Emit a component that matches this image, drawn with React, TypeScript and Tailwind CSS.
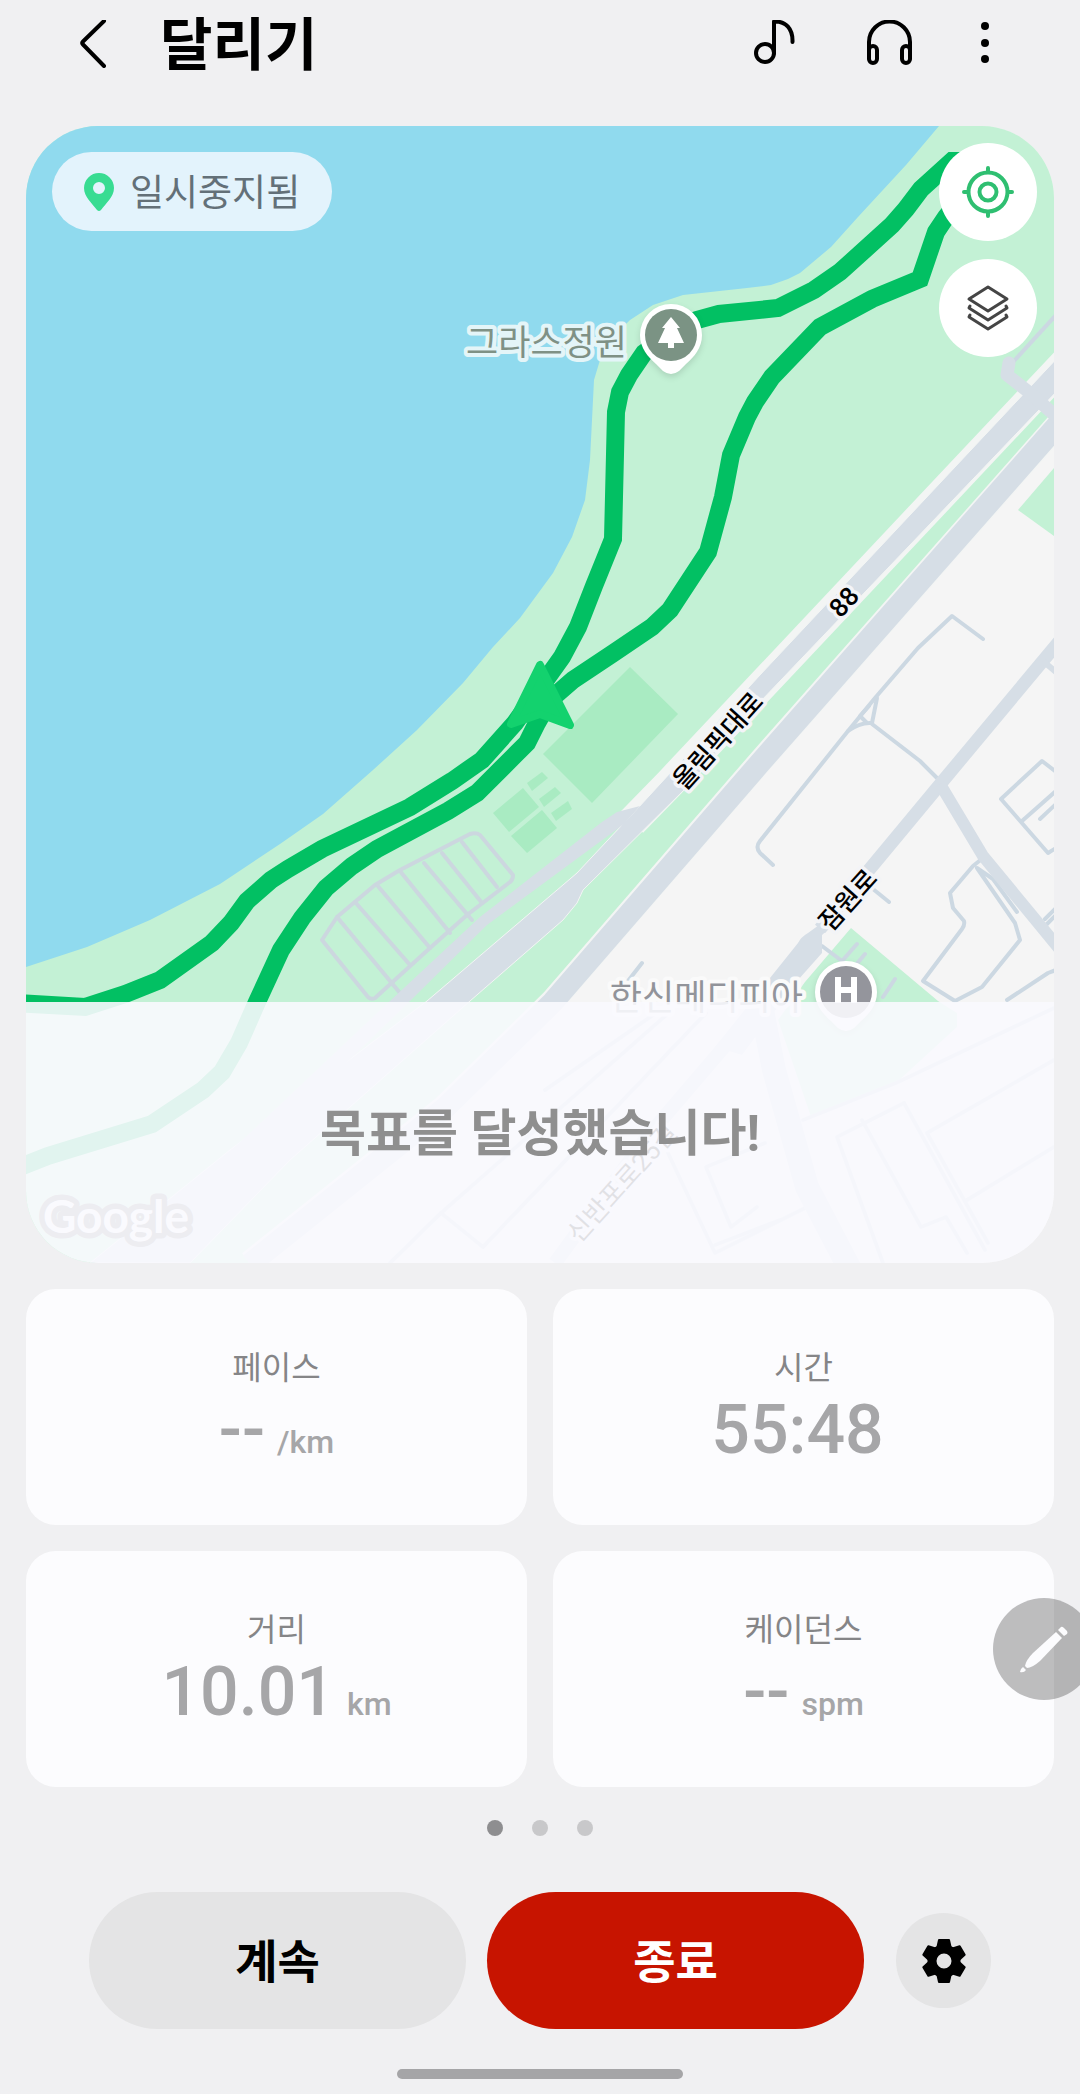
import React from 'react';

type Metric = {
  label: string;
  value: string;
  unit?: string;
};

const metrics: Metric[] = [
  { label: '페이스', value: '--', unit: '/km' },
  { label: '시간', value: '55:48' },
  { label: '거리', value: '10.01', unit: 'km' },
  { label: '케이던스', value: '--', unit: 'spm' },
];

const Header: React.FC = () => {
  return (
    <header className="flex h-[88px] items-center pl-[70px] pr-[91px]">
      <button type="button" aria-label="뒤로" className="flex h-12 w-12 items-center justify-center">
        <svg width="48" height="48" viewBox="0 0 48 48" fill="none" stroke="#000" strokeWidth="4" strokeLinecap="round" strokeLinejoin="round">
          <path d="M34 1 13 21.500Q11.500 23 13 24.500L34 46" />
        </svg>
      </button>
      <h1 className="ml-[42px] flex-1 pt-1 text-[57px] font-bold leading-[72px] text-black">달리기</h1>
      <div className="flex items-center">
        <button type="button" aria-label="음악" className="mr-[62px] flex">
          <svg width="48" height="48" viewBox="0 0 48 48" fill="none" stroke="#000" strokeWidth="4" strokeLinecap="round" strokeLinejoin="round">
            <circle cx="14" cy="33" r="9" />
            <path d="M23 33V1.500C35 1 42 9 41.500 22" />
          </svg>
        </button>
        <button type="button" aria-label="오디오 안내" className="mr-16 flex">
          <svg width="56" height="48" viewBox="0 0 56 48" fill="none" stroke="#000" strokeWidth="4" strokeLinecap="round" strokeLinejoin="round">
            <path d="M8 38V22a20.500 20.500 0 0 1 41 0v16" />
            <rect x="8" y="26" width="8" height="17" rx="4" />
            <rect x="41" y="26" width="8" height="17" rx="4" />
          </svg>
        </button>
        <button type="button" aria-label="더보기" className="flex">
          <svg width="8" height="48" viewBox="0 0 8 48" fill="#000">
            <circle cx="4" cy="6" r="4" />
            <circle cx="4" cy="23" r="4" />
            <circle cx="4" cy="39" r="4" />
          </svg>
        </button>
      </div>
    </header>
  );
};

const MapDrawing: React.FC = () => {
  return (
    <svg
      className="absolute inset-0 h-full w-full"
      viewBox="26 126 1028 1137"
      preserveAspectRatio="xMidYMid slice"
      role="img"
      aria-label="운동 경로 지도"
    >
      {/* 땅과 강 */}
      <rect x="26" y="126" width="1028" height="1137" fill="#f5f5f5" />
      <path
        fill="#c3f1d5"
        d="M26 126H1054V427L760 762 553 1001 445 1107 250 1263H26Z"
      />
      <path
        fill="#90daee"
        d="M26 126H939L906 165 858 217 831 247 800 273 788 279 771 285 747 288 683 295 653 305 630 320 610 340 600 360 594 380 592 420 590 460 585 500 572 537 553 573 520 618 493 647 463 683 417 730 373 770 323 814 280 844 220 884 150 920 87 947 26 967Z"
      />
      <path fill="#c3f1d5" d="M1054 468 1018 510 1054 536Z" />
      <path fill="#c3f1d5" d="M851 928 938 1001 957 1013V1027L896 1083 811 1117 778 1020 805 982Z" />

      {/* 운동장 */}
      <g fill="#a9ebc2">
        <path d="M630 667 678 714 592 803 543 754Z" />
        <path d="M527 783 542 772 548 778 532 791Z" />
        <path d="M539 799 555 787 561 793 544 807Z" />
        <path d="M551 813 568 801 572 809 556 821Z" />
        <path d="M493 813 523 788 539 807 509 832Z" />
        <path d="M511 836 542 810 557 828 527 853Z" />
      </g>

      {/* 주차장 */}
      <g fill="none" stroke="#ccd7df" strokeWidth="4" strokeLinejoin="round" strokeLinecap="round">
        <path d="M322 940 337 917 375 885 400 870 470 834Q476 832 480 835L513 875Q513 880 510 882L467 915 430 948 375 998Q371 1000 368 997Z" />
        <path d="M337 917 400 993M355 902 410 965M377 885 430 948M400 871 450 933M424 863 472 920M442 853 482 903M462 842 497 887" />
      </g>

      {/* 골목길 */}
      <g fill="none" stroke="#ccd8e2" strokeWidth="4" strokeLinejoin="round" strokeLinecap="round">
        <path d="M983 639 952 616 918 648 875 698 848 731 760 841Q755 847 760 853L773 865" />
        <path d="M877 698 872 723Q860 722 848 731M869 706 860 716 867 723" />
        <path d="M872 724 920 761 937 778" />
        <path d="M1060 775 1042 761 1001 799 1048 853 1056 848M1022 821 1056 791M1040 819 1056 804" />
        <path d="M983 858 973 866 950 893 953 908 964 921Q965 925 962 929L923 981 955 1001 982 987 1020 940 1015 923 977 868 993 879 1017 912" />
        <path d="M1045 919 1056 908M1047 924 1056 915M1056 970 1048 973 1007 1000" />
        <path d="M873 889 889 902M822 946 842 961 857 944M865 954 855 966M895 979 883 997M642 963 628 981" />
        <path d="M672 1010 441 1213 483 1247 706 1013M656 1013 545 1090M1054 1008 896 1083 803 1120" />
        <path d="M1054 1060 927 1133 988 1243M1054 1147 967 1200M904 1103 837 1137 883 1263" />
        <path d="M862 1120 921 1227 946 1217 967 1253M904 1103 985 1250M668 1153 715 1253 807 1207" />
        <path d="M765 1143 706 1167 731 1227 757 1207M715 1245 780 1220M441 1213 390 1263" />
      </g>

      {/* 큰길 */}
      <g fill="none" stroke="#d6dee6" strokeLinejoin="round">
        <path strokeWidth="13" d="M1062 638 942 782 820 929" />
        <path strokeWidth="12" d="M940 784 983 856 1062 952" />
        <path strokeWidth="6" d="M1043 661 1056 672" />
        <path strokeWidth="24" d="M760 1000 774 1070 807 1187 853 1275" />
        <path strokeWidth="14" d="M730 1040 647 1137 555 1263" />
      </g>
      <path fill="#d6dee6" d="M826 920 808 933Q801 937 798 943L715 1047 742 1055 798 980 822 953V935L832 926Z" />

      {/* 올림픽대로 */}
      <path fill="none" stroke="#f3f5f4" strokeWidth="31" d="M1070 358 670 783 632 822" />
      <path fill="none" stroke="#f3f5f4" strokeWidth="25" d="M1070 411 760 762 553 1001 445 1107 250 1263" />
      <path fill="none" stroke="#d6dee6" strokeWidth="22" d="M1070 411 760 763 553 1002 445 1108 250 1264" />
      <path
        fill="#d6dee6"
        stroke="#f3f5f4"
        d="M1060 355 760 675 638 808 622 825 577 873 427 1001 230 1150 90 1263H190L290 1160 470 1001 563 920 577 903 583 890 688 786 760 702 1060 388Z"
      />
      <path fill="#d6dee6" d="M640 806 617 812 602 822 480 917 390 1001 200 1180 215 1190 410 1001 487 925 624 824Z" />
      <path fill="none" stroke="#ccd8e2" strokeWidth="4" d="M1056 315 1013 362" />
      <path fill="none" stroke="#d6dee6" strokeWidth="13" strokeLinecap="round" strokeLinejoin="round" d="M1009 363 1007 375 1030 393 1060 420" />

      {/* 달린 경로 */}
      <g fill="none" stroke="#02c063" strokeWidth="18" strokeLinejoin="miter">
        <path d="M975 161H952L921 189 906 209 892 225 840 272 814 290 778 308 719 314 697 320 672 332 644 353 629 375 620 392 616 412 613 539 594 586 578 627 562 657 515 723 482 760 452 781 410 807 322 849 288 869 271 880 247 901 231 923 212 943 160 980 125 994 85 1007 15 1003" />
        <path d="M960 200 946 217 936 232 920 279 872 299 820 327 772 377 755 402 747 417 731 455 723 497 708 552 670 610 652 627 612 654 573 680 550 700 537 723 527 743 513 757 477 793 448 811 377 849 352 866 326 888 302 918 281 950 257 1002 239 1043 222 1072 203 1090 152 1124 48 1156 15 1169" />
      </g>
      <path fill="#13d26e" stroke="#13d26e" strokeWidth="8" strokeLinejoin="round" d="M540 665 511 724 540 714 570 725Z" />

      {/* 지명 */}
      <g fontSize="35" textAnchor="end" paintOrder="stroke" strokeWidth="8" strokeLinejoin="round">
        <text x="627" y="355" fill="#7f9185" stroke="#e4f5f8">그라스정원</text>
        <text x="803" y="1010" fill="#92949a" stroke="#fafafa">한신메디피아</text>
      </g>
      <g fontSize="26" fontWeight="500" textAnchor="middle" fill="#000" stroke="#f3f4f7" paintOrder="stroke" strokeWidth="7" strokeLinejoin="round">
        <text transform="translate(718 741) rotate(-48)" y="9">올림픽대로</text>
        <text transform="translate(844 602) rotate(-48)" y="9">88</text>
        <text transform="translate(848 900) rotate(-48)" y="9">잠원로</text>
        <text transform="translate(622 1183) rotate(-48)" y="9" fontWeight="400">신반포로25길</text>
      </g>

      {/* 장소 핀 */}
      <g className="drop-shadow-md">
        <path fill="#fff" d="M640 335a31 31 0 1 1 62 0c0 13-8 22-16 29l-7 7q-8 6-16 0l-7-7c-8-7-16-16-16-29Z" />
        <circle cx="671" cy="335" r="26" fill="#7b9384" />
        <path fill="#fff" d="M671 317 680 328H677L684 343H674V348H668V343H658L665 328H662Z" />
      </g>
      <g className="drop-shadow-md">
        <path fill="#fff" d="M815 992a31 31 0 1 1 62 0c0 13-8 22-16 29l-7 7q-8 6-16 0l-7-7c-8-7-16-16-16-29Z" />
        <circle cx="846" cy="992" r="26" fill="#94959c" />
        <path fill="none" stroke="#fff" strokeWidth="6" d="M838 977V1003M854 977V1003M838 990H854" />
      </g>

      <text x="43" y="1233" fontSize="46" fontWeight="700" fill="#fff" stroke="#77777a" strokeWidth="11" strokeLinejoin="round" paintOrder="stroke" className="font-['Lato',sans-serif]">
        Google
      </text>
    </svg>
  );
};

const MapPanel: React.FC = () => {
  return (
    <section className="relative aspect-[1028/1137] overflow-hidden rounded-[72px]">
      <MapDrawing />

      {/* 상태 표시 */}
      <div className="absolute left-[26px] top-[26px] flex h-[79px] items-center gap-4 rounded-full bg-[#e3f3fc] px-8">
        <svg width="30" height="38" viewBox="0 0 30 38">
          <path fill="#38dc92" fillRule="evenodd" d="M15 0a15 15 0 0 1 15 15c0 9-8 15-13 22q-2 2-4 0C8 30 0 24 0 15A15 15 0 0 1 15 0Zm0 9a6 6 0 1 0 0 12 6 6 0 0 0 0-12Z" />
        </svg>
        <span className="pt-1 text-[37px] leading-[48px] text-[#637078]">일시중지됨</span>
      </div>

      {/* 지도 버튼 */}
      <div className="absolute right-[17px] top-[17px] flex flex-col gap-[18px]">
        <button type="button" aria-label="현재 위치" className="flex h-[98px] w-[98px] items-center justify-center rounded-full bg-white">
          <svg width="52" height="52" viewBox="0 0 52 52" fill="none" stroke="#2fbf71" strokeWidth="4">
            <circle cx="26" cy="26" r="19.500" />
            <circle cx="26" cy="26" r="8.500" />
            <path strokeLinecap="round" d="M26 2v4M26 46v4M2 26h4M46 26h4" />
          </svg>
        </button>
        <button type="button" aria-label="지도 유형" className="flex h-[98px] w-[98px] items-center justify-center rounded-full bg-white">
          <svg width="46" height="48" viewBox="0 0 46 48" fill="none" stroke="#454545" strokeWidth="3" strokeLinecap="round" strokeLinejoin="round">
            <path d="M23 3 42 15 23 27 4 15Z" />
            <path d="M5 22 4 24 23 36 42 24 41 22M5 31 4 33 23 45 42 33 41 31" />
          </svg>
        </button>
      </div>

      {/* 목표 달성 메시지 */}
      <div className="absolute inset-x-0 bottom-0 flex h-[23%] items-center justify-center bg-[#fafafe]/90">
        <p className="pt-1 text-[50px] font-bold leading-[64px] text-[#8f8f8f]">목표를 달성했습니다!</p>
      </div>
    </section>
  );
};

const MetricCard: React.FC<Metric> = ({ label, value, unit }) => {
  return (
    <div className="flex h-[236px] flex-col items-center justify-center gap-0.5 rounded-[30px] bg-[#fcfcfe] pt-1">
      <p className="text-[32px] leading-[40px] text-[#858587]">{label}</p>
      <p className="flex items-baseline gap-3 text-[68px] font-medium leading-[80px] text-[#a6a6a8]">
        <span>{value}</span>
        <span className="text-[32px] leading-[40px]">{unit}</span>
      </p>
    </div>
  );
};

const App: React.FC = () => {
  return (
    <div className="relative min-h-screen overflow-hidden bg-[#f0f0f2] font-['Roboto','Noto_Sans_CJK_KR',sans-serif]">
      <Header />

      <main className="mt-[38px] px-[26px]">
        <MapPanel />

        <div className="relative mt-[26px]">
          <div className="grid grid-cols-2 gap-[26px]">
            {metrics.map((metric) => (
              <MetricCard key={metric.label} {...metric} />
            ))}
          </div>

          {/* 화면 가장자리의 펜 버튼 */}
          <button
            type="button"
            aria-label="메모 작성"
            className="absolute -right-[41px] top-[309px] flex h-[102px] w-[102px] items-center justify-center rounded-full bg-black/25"
          >
            <svg width="48" height="48" viewBox="0 0 48 48" fill="#fcfcfe">
              <path d="M36 7 42 13 20 36Q12 43 7 43L5 41Q6 35 13 28Z" />
              <path d="M38 5 41 2Q42 1 44 3L47 6Q48 8 47 9L44 11Z" />
              <path d="M3 42 6 45Q4 48 0 47 0 44 3 42Z" />
            </svg>
          </button>
        </div>

        <div className="mt-[33px] flex justify-center gap-[29px]">
          <span className="h-4 w-4 rounded-full bg-[#8e8e90]"></span>
          <span className="h-4 w-4 rounded-full bg-[#c8c8ca]"></span>
          <span className="h-4 w-4 rounded-full bg-[#c8c8ca]"></span>
        </div>
      </main>

      <footer className="mt-14 px-[89px]">
        <div className="flex items-center">
          <button type="button" className="h-[137px] flex-1 rounded-full bg-[#e4e4e5] pt-1 text-[46px] font-bold text-black">
            계속
          </button>
          <button type="button" className="ml-[21px] h-[137px] flex-1 rounded-full bg-[#c71400] pt-1 text-[46px] font-bold text-white">
            종료
          </button>
          <button type="button" aria-label="설정" className="ml-8 flex h-[95px] w-[95px] items-center justify-center rounded-full bg-[#e4e4e5]">
            <svg width="44" height="44" viewBox="-22 -22 44 44">
              <g stroke="#000" strokeWidth="2" strokeLinejoin="round">
                <path d="M-5 -21H5L7 -12H-7ZM-5 21H5L7 12H-7Z" />
                <path d="M-5 -21H5L7 -12H-7ZM-5 21H5L7 12H-7Z" transform="rotate(60)" />
                <path d="M-5 -21H5L7 -12H-7ZM-5 21H5L7 12H-7Z" transform="rotate(120)" />
              </g>
              <circle r="12" fill="none" stroke="#000" strokeWidth="9" />
            </svg>
          </button>
        </div>
        <div className="mx-auto mt-10 h-[10px] w-[286px] rounded-full bg-[#a5a5a7]"></div>
      </footer>
    </div>
  );
};

export default App;
